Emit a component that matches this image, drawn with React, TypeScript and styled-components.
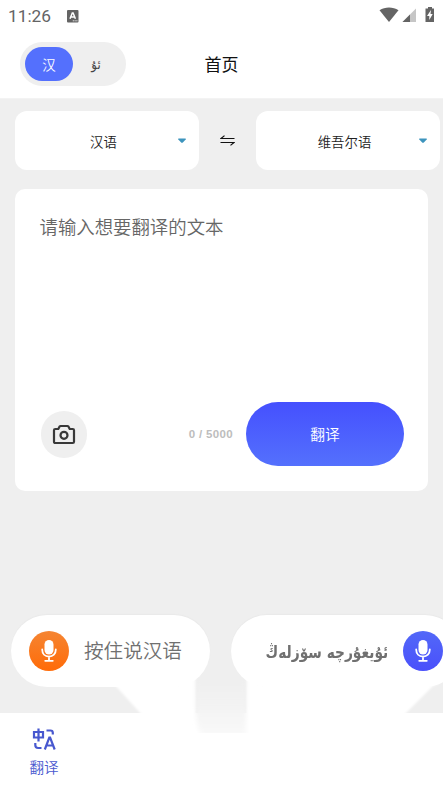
import React from "react";
import styled, { createGlobalStyle } from "styled-components";

const GlobalStyle = createGlobalStyle`
  * { box-sizing: border-box; }
  html, body { margin: 0; padding: 0; overflow: hidden; }
  body { background: #efefef; }
  button { border: 0; padding: 0; font: inherit; }
`;

const sans = `"Noto Sans CJK SC", sans-serif`;

const Screen = styled.div`
  width: 443px;
  height: 789px;
  overflow: hidden;
  display: flex;
  flex-direction: column;
  background: #efefef;
  font-family: ${sans};
  font-weight: 350;
`;

const Header = styled.header`
  height: 99px;
  flex: none;
  background: #fff;
  border-bottom: 1px solid #f3f3f3;
`;

const StatusBar = styled.div`
  height: 32px;
  display: flex;
  align-items: center;
  justify-content: space-between;
  padding: 0 8px;
`;

const StatusGroup = styled.div`
  display: flex;
  align-items: center;
`;

const Clock = styled.span`
  width: 59px;
  font: 400 17.3px/20px Roboto, sans-serif;
  color: #646464;
`;

const TitleBar = styled.div`
  display: grid;
  grid-template-columns: 1fr auto 1fr;
  align-items: center;
  height: 64px;
  padding: 0 20px;
`;

const Title = styled.h1`
  margin: 0;
  font-size: 17px;
  line-height: 24px;
  font-weight: 400;
  color: #111;
`;

const Toggle = styled.div`
  width: 106px;
  height: 44px;
  padding: 5px;
  display: flex;
  border-radius: 22px;
  background: #efefef;
`;

const ToggleOption = styled.button<{ $active?: boolean }>`
  width: 48px;
  height: 34px;
  border-radius: 17px;
  background: ${(p) => (p.$active ? "#5470fd" : "transparent")};
  color: ${(p) => (p.$active ? "#fff" : "#444")};
  font-size: ${(p) => (p.$active ? "13.5px" : "13px")};
  font-family: ${(p) => (p.$active ? sans : `"DejaVu Sans Condensed", "DejaVu Sans", sans-serif`)};
  padding: ${(p) => (p.$active ? "0" : "0 2px 0 0")};
`;

const Main = styled.main`
  flex: none;
  height: 516px;
  padding: 12px 15px 0;
`;

const LanguageRow = styled.div`
  display: flex;
  width: 425px;
`;

const LanguageSelect = styled.button`
  width: 184px;
  height: 59px;
  flex: none;
  display: grid;
  grid-template-columns: 1fr 8px;
  align-items: center;
  padding: 0 13px 0 14px;
  background: #fff;
  border-radius: 12px;
  font-size: 13.4px;
  color: #222;
`;

const Swap = styled.button`
  flex: 1;
  display: flex;
  align-items: center;
  justify-content: center;
  background: transparent;
`;

const Card = styled.section`
  width: 413px;
  height: 302px;
  margin-top: 18.5px;
  padding: 23px 24px 25px 24.5px;
  background: #fff;
  border-radius: 10px;
  display: flex;
  flex-direction: column;
  justify-content: space-between;
`;

const Placeholder = styled.div`
  font-size: 18.4px;
  line-height: 28px;
  color: #666;
`;

const CardActions = styled.div`
  height: 64px;
  display: flex;
  align-items: center;
`;

const CameraButton = styled.button`
  width: 46.5px;
  height: 46.5px;
  margin-left: 1px;
  margin-top: 2px;
  border-radius: 50%;
  background: #efefef;
  display: grid;
  place-items: center;
`;

const Counter = styled.span`
  margin-left: auto;
  margin-right: 13px;
  font: 700 11.5px/14px "Liberation Sans", sans-serif;
  letter-spacing: 0.35px;
  color: #bdbdbd;
`;

const TranslateButton = styled.button`
  width: 158px;
  height: 64px;
  padding-bottom: 1px;
  border-radius: 32px;
  background: linear-gradient(#4550fe, #5470fd);
  color: #fff;
  font-size: 14.8px;
`;

const Footer = styled.footer`
  position: relative;
  flex: 1;
  display: flex;
  flex-direction: column;
`;

const VoiceRow = styled.div`
  height: 98px;
  padding-left: 11px;
  display: flex;
  align-items: flex-start;
  gap: 21px;
`;

const VoicePill = styled.button<{ $width: number; $gap: number; $rtl?: boolean }>`
  position: relative;
  z-index: 1;
  flex: none;
  width: ${(p) => p.$width}px;
  height: 72px;
  border-radius: 36px;
  background: #fff;
  display: flex;
  flex-direction: ${(p) => (p.$rtl ? "row-reverse" : "row")};
  align-items: center;
  gap: ${(p) => p.$gap}px;
  padding: 0 18px;
  box-shadow: 0 -1px 1px #e9e9e9;
`;

const MicCircle = styled.span<{ $from: string; $to: string }>`
  width: 40px;
  height: 40px;
  flex: none;
  border-radius: 50%;
  display: grid;
  place-items: center;
  background: linear-gradient(${(p) => p.$from}, ${(p) => p.$to});
`;

const VoiceLabel = styled.span`
  color: #707070;
  white-space: nowrap;
  font-size: 19.6px;
  line-height: 30px;
  margin-top: -2px;
`;

const UyghurLabel = styled(VoiceLabel)`
  font: 700 17px/30px "DejaVu Sans Condensed", "DejaVu Sans", sans-serif;
  font-stretch: condensed;
  margin-top: 1px;
  transform: scaleX(0.9);
  transform-origin: right center;
`;

const TabBar = styled.nav`
  flex: 1;
  background: #fff;
  display: flex;
`;

const Tab = styled.button`
  width: 88px;
  padding-top: 15px;
  background: transparent;
  display: flex;
  flex-direction: column;
  align-items: center;
  gap: 2px;
  color: #4858cf;
  font-size: 14.6px;
  line-height: 25px;
`;

const Glow = styled.svg`
  position: absolute;
  left: 0;
  top: 60px;
  pointer-events: none;
`;

const KeyboardIcon = () => (
  <svg width="12" height="13" viewBox="0 0 12 13">
    <rect width="11.5" height="12.5" rx="1" fill="#646464" />
    <path d="M3 8.7 5.3 3h.8l2.3 5.7M3.8 7h3.8" fill="none" stroke="#fff" strokeWidth="1.5" />
    <path d="M5.8 10.8h1M7.6 10.8h1M9.4 10.8h1" stroke="#fff" strokeWidth="1" />
  </svg>
);

const SignalIcons = () => (
  <svg width="56" height="18" viewBox="0 0 56 18">
    <path d="M.5 3.200C6-.5 14-.5 19.500 3.200L10 15Z" fill="#646464" />
    <path d="M37 1.500V15H23.500Z" fill="#c6c6c6" />
    <path d="M31 7.500V15h-7.500Z" fill="#646464" />
    <path d="M49 0h4v1.500h2V15h-8.500V1.500H49Z" fill="#646464" />
    <path d="m52 3-4 6h2.300v4l3.400-6h-2.200Z" fill="#fff" />
  </svg>
);

const Caret = () => (
  <svg width="8" height="5" viewBox="0 0 8 5">
    <path d="M.3.6h7.400v1L4.600 4.700H3.400L.3 1.600Z" fill="#3d94bd" />
  </svg>
);

const SwapIcon = () => (
  <svg width="15" height="11" viewBox="0 0 15 11" fill="none" stroke="#111" strokeWidth="1.200">
    <path d="M14.500 3.500H1L4.500.600M.500 7.500H14L10.500 10.400" />
  </svg>
);

const CameraIcon = () => (
  <svg width="24" height="22" viewBox="0 0 24 22" fill="none" stroke="#383838" strokeWidth="2.200">
    <path
      d="M3.300 5H6.300L7.600 2.500Q8 2 8.600 2H15.400Q16 2 16.400 2.500L17.700 5H20.700Q22 5 22 6.300V17.700Q22 19 20.700 19H3.300Q2 19 2 17.700V6.300Q2 5 3.300 5Z"
      strokeLinejoin="round"
    />
    <circle cx="12" cy="11.300" r="3.500" />
  </svg>
);

const MicIcon = () => (
  <svg width="16" height="22" viewBox="0 0 16 22">
    <rect x="3.500" y="0" width="9" height="14.500" rx="4.500" fill="#fff" />
    <path
      d="M1.200 9.500C1.200 14 4 16.600 8 16.600s6.800-2.600 6.800-7.100M8 16.400V20.500M4.200 20.800h7.600"
      fill="none"
      stroke="#fff"
      strokeWidth="1.800"
      strokeLinecap="round"
    />
  </svg>
);

const TranslateIcon = () => (
  <svg width="24" height="24" viewBox="0 0 24 24" fill="none" stroke="currentColor" strokeWidth="2.200">
    <path d="M2 4h9v5.500H2ZM6.500 .5v13" />
    <path d="M14.500 2.500h4q2.300 0 2.300 2.300v1.700M3.300 15v2q0 3 2.800 3H9.500" />
    <path d="M12.800 21.500 17.300 9.500h.8l4.600 12M14.500 17.500h6.500" />
  </svg>
);

export default function App() {
  return (
    <>
      <GlobalStyle />
      <Screen>
        <Header>
          <StatusBar>
            <StatusGroup>
              <Clock>11:26</Clock>
              <KeyboardIcon />
            </StatusGroup>
            <SignalIcons />
          </StatusBar>
          <TitleBar>
            <Toggle>
              <ToggleOption $active>汉</ToggleOption>
              <ToggleOption lang="ug">ئۇ</ToggleOption>
            </Toggle>
            <Title>首页</Title>
          </TitleBar>
        </Header>
        <Main>
          <LanguageRow>
            <LanguageSelect>
              汉语
              <Caret />
            </LanguageSelect>
            <Swap aria-label="⇋">
              <SwapIcon />
            </Swap>
            <LanguageSelect>
              维吾尔语
              <Caret />
            </LanguageSelect>
          </LanguageRow>
          <Card>
            <Placeholder>请输入想要翻译的文本</Placeholder>
            <CardActions>
              <CameraButton>
                <CameraIcon />
              </CameraButton>
              <Counter>0 / 5000</Counter>
              <TranslateButton>翻译</TranslateButton>
            </CardActions>
          </Card>
        </Main>
        <Footer>
          <VoiceRow>
            <VoicePill $width={199} $gap={15}>
              <MicCircle $from="#f58532" $to="#ff6b08">
                <MicIcon />
              </MicCircle>
              <VoiceLabel>按住说汉语</VoiceLabel>
            </VoicePill>
            <VoicePill $width={230} $gap={15} $rtl>
              <MicCircle $from="#5268f8" $to="#4a50fb">
                <MicIcon />
              </MicCircle>
              <UyghurLabel lang="ug" dir="rtl">
                ئۇيغۇرچە سۆزلەڭ
              </UyghurLabel>
            </VoicePill>
          </VoiceRow>
          <TabBar>
            <Tab>
              <TranslateIcon />
              翻译
            </Tab>
          </TabBar>
          <Glow width="443" height="70" viewBox="0 0 443 70">
            <defs>
              <linearGradient id="fade" x1="0" y1="0" x2="0" y2="1">
                <stop offset="0" stopColor="#efefef" />
                <stop offset="0.5" stopColor="#f3f3f3" />
                <stop offset="1" stopColor="#f9f9f9" />
              </linearGradient>
              <filter id="soft" x="-10%" y="-10%" width="120%" height="120%">
                <feGaussianBlur stdDeviation="1" />
              </filter>
              <filter id="sideways" x="-20%" y="0" width="140%" height="100%">
                <feGaussianBlur stdDeviation="2 0" />
              </filter>
            </defs>
            <path d="M113 8H180V4H196V40H142Z" fill="#fff" filter="url(#soft)" />
            <path d="M246 4H260V8H440L433 11L404 40H246Z" fill="#fff" filter="url(#soft)" />
            <path d="M196 5H246V58H200Q196 48 196 35Z" fill="url(#fade)" filter="url(#sideways)" />
          </Glow>
        </Footer>
      </Screen>
    </>
  );
}
